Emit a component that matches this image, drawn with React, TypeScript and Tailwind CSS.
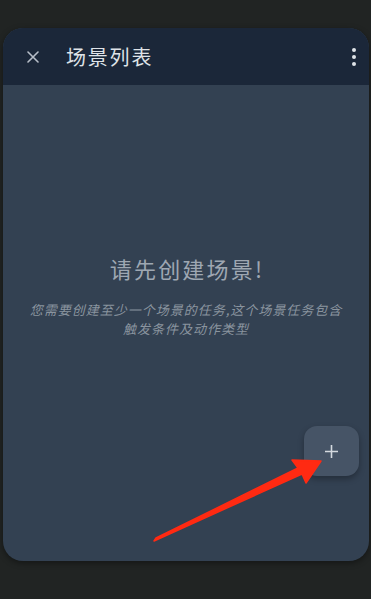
import React from 'react';

function App() {
  return (
    <div className="relative w-[371px] h-[599px] overflow-hidden bg-[#212423] pt-[28px] px-[3px] font-['Noto_Sans_CJK_SC',sans-serif]">
      <div className="relative flex flex-col w-[366px] h-[533px] rounded-[20px] overflow-hidden bg-[#334152] shadow-[0_2px_6px_rgba(0,0,0,0.4)]">
        <header className="flex items-center h-[57px] bg-[#1b2739] text-[#dfe3e8]">
          <button className="w-[60px] flex justify-center text-[#b7bec8]">
            <svg width="12" height="12" viewBox="0 0 12 12" stroke="currentColor" strokeWidth="1.6" strokeLinecap="round">
              <path d="M1 1L11 11M11 1L1 11" />
            </svg>
          </button>
          <h1 className="text-[20px] leading-none tracking-[1.8px] ml-[3px]">场景列表</h1>
          <div className="ml-auto mr-[13px] flex flex-col gap-[3px]">
            <span className="w-[4px] h-[4px] rounded-full bg-[#dfe3e8]" />
            <span className="w-[4px] h-[4px] rounded-full bg-[#dfe3e8]" />
            <span className="w-[4px] h-[4px] rounded-full bg-[#dfe3e8]" />
          </div>
        </header>
        <main className="flex-1 flex flex-col items-center pt-[168px]">
          <p className="text-[22px] leading-[30px] text-[#9ea7b2] tracking-[2.2px] pl-[2px]">请先创建场景!</p>
          <p className="mt-[17px] text-[13px] leading-[19px] italic text-[#8a949f] text-center tracking-[1px] whitespace-nowrap">
            您需要创建至少一个场景的任务,这个场景任务包含
            <br />
            触发条件及动作类型
          </p>
        </main>
        <button className="absolute left-[301px] top-[398px] w-[55px] h-[50px] rounded-[13px] bg-[#465466] shadow-[0_3px_6px_rgba(0,0,0,0.3)] flex items-center justify-center text-[#d4d9df]">
          <svg width="13" height="13" viewBox="0 0 13 13" stroke="currentColor" strokeWidth="1.6">
            <path d="M6.5 0V13M0 6.5H13" />
          </svg>
        </button>
      </div>
      <svg className="absolute left-0 top-0 pointer-events-none" width="371" height="599" viewBox="0 0 371 599">
        <path d="M154 541 L156 538 L298 468 L292 460 L321 461 L306 483 L302 474 Z" fill="#ff2a12" stroke="#ff2a12" strokeWidth="1.5" strokeLinejoin="round" />
      </svg>
    </div>
  );
}

export default App;
